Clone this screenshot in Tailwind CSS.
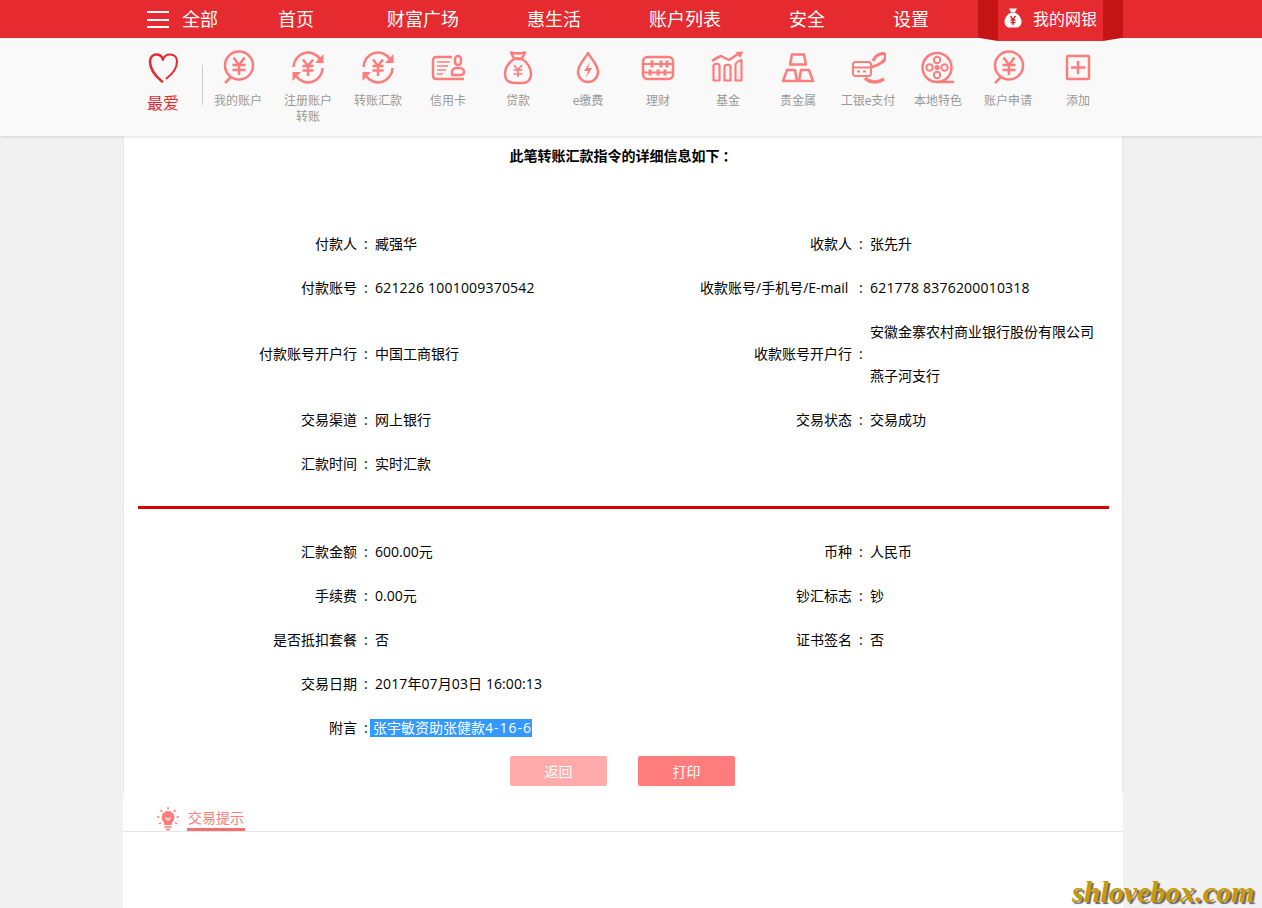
<!DOCTYPE html>
<html lang="zh-CN"><head><meta charset="utf-8"><script src="https://cdn.jsdelivr.net/npm/@tailwindcss/browser@4"></script></head>
<body class="bg-[#f1f1f1] m-0 overflow-hidden h-[908px] relative font-['Open_Sans','Noto_Sans_CJK_SC',sans-serif] text-[14px] text-black">
<header class="h-[38px] bg-[#e52b30] relative text-white text-[18px] leading-[38px] flex pl-[147px]">
  <div class="w-[22px] mt-[11px] h-[17px] flex flex-col justify-between"><i class="block h-[2px] bg-white"></i><i class="block h-[2px] bg-white"></i><i class="block h-[2px] bg-white"></i></div>
  <span class="ml-[13px]">全部</span><span class="ml-[60px]">首页</span><span class="ml-[73px]">财富广场</span><span class="ml-[68px]">惠生活</span><span class="ml-[68px]">账户列表</span><span class="ml-[68px]">安全</span><span class="ml-[68px]">设置</span>
  <div class="absolute left-[978px] top-0 w-[145px] h-[41px] z-20 flex text-[16px]">
    <div class="w-5 h-[41px] bg-[#c41414] [clip-path:polygon(0_0,100%_0,100%_100%,0_92%)]"></div>
    <div class="w-[105px] h-[41px] bg-[#e52b30] flex items-start pl-[6px] pt-[8px]">
      <svg width="18" height="20" viewBox="0 0 18 20"><path d="M5 0.500h8l-2 3.500H7z" fill="#fff"/><path d="M7 4.500h4c4 2 6.500 6 6.500 9 0 3.500-2 6-5 6h-7c-3 0-5-2.500-5-6 0-3 2.500-7 6.500-9z" fill="#fff"/><path d="M6.500 8l2.500 3.500L11.500 8M6.500 12h5M6.500 14.500h5M9 11.500V17" fill="none" stroke="#d42020" stroke-width="1.300"/></svg>
      <span class="ml-[11px] leading-[22px]">我的网银</span>
    </div>
    <div class="w-5 h-[41px] bg-[#c41414] [clip-path:polygon(0_0,100%_0,100%_92%,0_100%)]"></div>
  </div>
</header>

<nav class="h-[98px] bg-[#f9f9f9] shadow-[0_1px_3px_rgba(0,0,0,0.12)] relative z-10 flex pl-[145px] text-[12px] leading-4 text-[#999]">
  <div class="w-[36px] flex flex-col items-center pt-[12px] text-[#e52b30] text-[16px]">
    <svg width="32" height="34" viewBox="0 0 32 34" fill="none" stroke="#e52b30" stroke-linecap="round"><path d="M15 31.500C7 25 3 18 3 11.500 3 7 6 4.500 9.500 4.500 12.500 4.500 15 6.500 16 9.500" stroke-width="2.600"/><path d="M16 9.500C17 6.500 20 4.500 23 4.500 27 4.500 30 7 30 11.500 30 17 26 23.500 19.500 28.500" stroke-width="2"/></svg>
    <span class="mt-[9px] leading-5">最爱</span>
  </div>
  <div class="w-px h-10 bg-[#ccc] ml-[21px] mt-[27px]"></div>
  <div class="flex">
    <div class="w-[70px] text-center pt-[12px]"><svg class="mx-auto block" width="36" height="36" viewBox="0 0 36 36" fill="none" stroke="#ff7c7c" stroke-width="2.500"><circle cx="19" cy="15.500" r="14"/><path d="M5 33l6-6"/><path d="M13.500 7.500l5.500 7.500 5.500-7.500M12.500 15h13M12.500 20h13M19 15v10"/></svg><div class="mt-[7px] h-8">我的账户</div></div>
    <div class="w-[70px] text-center pt-[12px]"><svg class="mx-auto block" width="36" height="36" viewBox="0 0 36 36" fill="none" stroke="#ff7c7c" stroke-width="2.500"><path d="M3.500 17A14.500 14.500 0 0 1 30 9M32.500 18A14.500 14.500 0 0 1 6 26"/><path d="M33.500 4v9h-8.500zM2.500 31v-9H11z" fill="#ff7c7c" stroke="none"/><path d="M13 9.500l5 6.500 5-6.500M12.500 16h11M12.500 20.500h11M18 16v10"/></svg><div class="mt-[7px] h-8">注册账户<br>转账</div></div>
    <div class="w-[70px] text-center pt-[12px]"><svg class="mx-auto block" width="36" height="36" viewBox="0 0 36 36" fill="none" stroke="#ff7c7c" stroke-width="2.500"><path d="M3.500 17A14.500 14.500 0 0 1 30 9M32.500 18A14.500 14.500 0 0 1 6 26"/><path d="M33.500 4v9h-8.500zM2.500 31v-9H11z" fill="#ff7c7c" stroke="none"/><path d="M13 9.500l5 6.500 5-6.500M12.500 16h11M12.500 20.500h11M18 16v10"/></svg><div class="mt-[7px] h-8">转账汇款</div></div>
    <div class="w-[70px] text-center pt-[12px]"><svg class="mx-auto block" width="36" height="36" viewBox="0 0 36 36" fill="none" stroke="#ff7c7c" stroke-width="2"><path d="M22 7H6a3 3 0 0 0-3 3v16a3 3 0 0 0 3 3h28" stroke-width="2.500"/><path d="M7 12h13M7 16h11M7 20h9M7 24h6" stroke-width="1.600"/><rect x="25" y="6" width="6" height="9" rx="3" stroke-width="2.500"/><path d="M22 25v-3a4 4 0 0 1 4-4h4a4 4 0 0 1 4 4v0a3 3 0 0 1-3 3z" stroke-width="2.500"/></svg><div class="mt-[7px] h-8">信用卡</div></div>
    <div class="w-[70px] text-center pt-[12px]"><svg class="mx-auto block" width="36" height="36" viewBox="0 0 36 36" fill="none" stroke="#ff7c7c" stroke-width="2.500" stroke-linejoin="round"><path d="M11 2.500c4 1 10 1 14 0l-3 6h-8z"/><path d="M14 9C8 13 5 18 5 24c0 6 4 9 9 9h8c5 0 9-3 9-9 0-6-3-11-9-15z"/><path d="M14 15l4 5 4-5M13.500 20h9M13.500 24h9M18 20v7" stroke-width="1.700"/></svg><div class="mt-[7px] h-8">贷款</div></div>
    <div class="w-[70px] text-center pt-[12px]"><svg class="mx-auto block" width="36" height="36" viewBox="0 0 36 36" fill="none" stroke="#ff7c7c" stroke-width="2.500" stroke-linejoin="round"><path d="M18 3c-3 6-10 11-10 19a10 10 0 0 0 20 0C28 14 21 9 18 3z"/><path d="M20 12l-6 9h4l-2 7 6-10h-4z" fill="#ff7c7c" stroke="none"/></svg><div class="mt-[7px] h-8">e缴费</div></div>
    <div class="w-[70px] text-center pt-[12px]"><svg class="mx-auto block" width="36" height="36" viewBox="0 0 36 36" fill="none" stroke="#ff7c7c" stroke-width="2.500"><rect x="3" y="7" width="30" height="22" rx="4.500"/><path d="M3 14h30M3 22.500h30" stroke-width="2"/><path d="M12 10.500v7M21 10.500v7M27 10.500v7M10 19.500v6M18 19.500v6M25 19.500v6" stroke-width="3"/></svg><div class="mt-[7px] h-8">理财</div></div>
    <div class="w-[70px] text-center pt-[12px]"><svg class="mx-auto block" width="36" height="36" viewBox="0 0 36 36" fill="none" stroke="#ff7c7c" stroke-width="2.200" stroke-linejoin="round"><path d="M3.500 30.500V16c0-3 6-3 6 0v14.500zM14.500 30.500V17c0-3 6-3 6 0v13.500zM25.500 30.500V15c0-3 6-5 6-5v20.500z"/><path d="M2 11c3-2 6-4 9-5l8 4 9-6" stroke-width="2.500"/><path d="M33.500 1.500l-8 .5 4.500 6z" fill="#ff7c7c" stroke="none"/></svg><div class="mt-[7px] h-8">基金</div></div>
    <div class="w-[70px] text-center pt-[12px]"><svg class="mx-auto block" width="36" height="36" viewBox="0 0 36 36" fill="none" stroke="#ff7c7c" stroke-width="2.500" stroke-linejoin="round"><path d="M12 4.500h12l2 10H10zM7 20h8l2 11H3zM21 20h8l4 11H19z"/></svg><div class="mt-[7px] h-8">贵金属</div></div>
    <div class="w-[70px] text-center pt-[12px]"><svg class="mx-auto block" width="36" height="36" viewBox="0 0 36 36" fill="none" stroke="#ff7c7c" stroke-width="2"><rect x="3" y="12" width="18" height="14" rx="2.500"/><path d="M3 17.500h18"/><path d="M7 21.500h3M13 21.500h3"/><path d="M23 11C26 4 35 1 35.500 6 36 11 29 15 22 17" stroke-width="3"/><path d="M15 28c5 5 13 5 19 1" stroke-width="3.500"/></svg><div class="mt-[7px] h-8">工银e支付</div></div>
    <div class="w-[70px] text-center pt-[12px]"><svg class="mx-auto block" width="36" height="36" viewBox="0 0 36 36" fill="none" stroke="#ff7c7c" stroke-width="2.500"><circle cx="17" cy="17.500" r="14.500"/><path d="M17 32h17"/><g stroke-width="2"><circle cx="17" cy="10" r="3.200"/><circle cx="17" cy="25" r="3.200"/><circle cx="9.500" cy="17.500" r="3.200"/><circle cx="24.500" cy="17.500" r="3.200"/></g><circle cx="17" cy="17.500" r="1.300" fill="#ff7c7c"/></svg><div class="mt-[7px] h-8">本地特色</div></div>
    <div class="w-[70px] text-center pt-[12px]"><svg class="mx-auto block" width="36" height="36" viewBox="0 0 36 36" fill="none" stroke="#ff7c7c" stroke-width="2.500"><circle cx="19" cy="15.500" r="14"/><path d="M5 33l6-6"/><path d="M13.500 7.500l5.500 7.500 5.500-7.500M12.500 15h13M12.500 20h13M19 15v10"/></svg><div class="mt-[7px] h-8">账户申请</div></div>
    <div class="w-[70px] text-center pt-[12px]"><svg class="mx-auto block" width="36" height="36" viewBox="0 0 36 36" fill="none" stroke="#ff7c7c" stroke-width="2.500"><rect x="7" y="6" width="22" height="23" rx="1"/><path d="M11 17.500h14M18 11v13"/></svg><div class="mt-[7px] h-8">添加</div></div>
  </div>
</nav>

<main class="w-[1000px] h-[657px] ml-[123px] bg-white border-x border-[#e8e8e8] box-border pl-[14px]">
  <h1 class="text-center font-bold text-[14px] leading-5 pt-[9px] pr-[14px] h-[85px]">此笔转账汇款指令的详细信息如下<span class="pl-[3px] font-['Noto_Sans_CJK_TC']">：</span></h1>

  <div class="grid grid-cols-[231px_264px_231px_1fr] grid-rows-[44px_44px_88px_44px_44px] items-center w-[971px]">
    <div class="text-right">付款人<b class="inline-block w-3 font-normal pl-[7px] text-left">:</b></div><div class="pl-[6px]">臧强华</div><div class="text-right">收款人<b class="inline-block w-3 font-normal pl-[7px] text-left">:</b></div><div class="pl-[6px]">张先升</div>
    <div class="text-right">付款账号<b class="inline-block w-3 font-normal pl-[7px] text-left">:</b></div><div class="pl-[6px] tracking-[0.2px]">621226 1001009370542</div><div class="text-right">收款账号/手机号/E-mail <b class="inline-block w-3 font-normal pl-[7px] text-left">:</b></div><div class="pl-[6px] tracking-[0.2px]">621778 8376200010318</div>
    <div class="text-right">付款账号开户行<b class="inline-block w-3 font-normal pl-[7px] text-left">:</b></div><div class="pl-[6px]">中国工商银行</div><div class="text-right">收款账号开户行<b class="inline-block w-3 font-normal pl-[7px] text-left">:</b></div><div class="pl-[6px] pt-[1px] leading-[44px]">安徽金寨农村商业银行股份有限公司<br>燕子河支行</div>
    <div class="text-right">交易渠道<b class="inline-block w-3 font-normal pl-[7px] text-left">:</b></div><div class="pl-[6px]">网上银行</div><div class="text-right">交易状态<b class="inline-block w-3 font-normal pl-[7px] text-left">:</b></div><div class="pl-[6px]">交易成功</div>
    <div class="text-right">汇款时间<b class="inline-block w-3 font-normal pl-[7px] text-left">:</b></div><div class="pl-[6px]">实时汇款</div>
  </div>

  <div class="h-[3px] w-[971px] bg-[#d90000] mt-[21px] mb-[20px]"></div>

  <div class="grid grid-cols-[231px_264px_231px_1fr] auto-rows-[44px] items-center w-[971px]">
    <div class="text-right">汇款金额<b class="inline-block w-3 font-normal pl-[7px] text-left">:</b></div><div class="pl-[6px]">600.00元</div><div class="text-right">币种<b class="inline-block w-3 font-normal pl-[7px] text-left">:</b></div><div class="pl-[6px]">人民币</div>
    <div class="text-right">手续费<b class="inline-block w-3 font-normal pl-[7px] text-left">:</b></div><div class="pl-[6px]">0.00元</div><div class="text-right">钞汇标志<b class="inline-block w-3 font-normal pl-[7px] text-left">:</b></div><div class="pl-[6px]">钞</div>
    <div class="text-right">是否抵扣套餐<b class="inline-block w-3 font-normal pl-[7px] text-left">:</b></div><div class="pl-[6px]">否</div><div class="text-right">证书签名<b class="inline-block w-3 font-normal pl-[7px] text-left">:</b></div><div class="pl-[6px]">否</div>
    <div class="text-right">交易日期<b class="inline-block w-3 font-normal pl-[7px] text-left">:</b></div><div class="pl-[6px] tracking-[0.1px]">2017年07月03日 16:00:13</div><div></div><div></div>
    <div class="text-right">附言<b class="inline-block w-3 font-normal pl-[7px] text-left">:</b></div><div><span class="inline-block h-[18px] leading-[18px] pl-[3px] ml-[1px] bg-[#3399ff] text-white">张宇敏资助张健款<span class="tracking-[1px]">4-16-6</span></span></div>
  </div>

  <div class="flex mt-[7px] ml-[372px] gap-[31px]">
    <button class="w-[97px] h-[30px] rounded-[2px] bg-[#ffabab] text-white text-[14px]">返回</button>
    <button class="w-[97px] h-[30px] rounded-[2px] bg-[#ff7c7c] text-white text-[14px]">打印</button>
  </div>
</main>

<section class="absolute left-[123px] top-[793px] w-[1000px] h-[115px] bg-white">
  <div class="h-[39px] border-b border-[#e5e5e5] flex items-end pl-[33px]">
    <svg width="24" height="24" viewBox="0 0 24 24" fill="none"><path d="M12 4a6.500 6.500 0 0 0-4 11.500V18h8v-2.500A6.500 6.500 0 0 0 12 4z" fill="#ff7c7c"/><path d="M9.500 10.500l2.500 2.500 2.500-2.500" stroke="#fff" stroke-width="1.300"/><path d="M8.500 20h7M10 22.500h4" stroke="#ff7c7c" stroke-width="1.500"/><path d="M12 0v2.500M4.500 3l1.500 2M19.500 3L18 5M1 10h2.500M20.500 10H23M3 17l2-1.500M21 17l-2-1.500" stroke="#ff7c7c" stroke-width="1.500"/></svg>
    <span class="ml-[7px] w-[58px] text-center text-[#ff7c7c] leading-[17px] pb-[2px] border-b-[3px] border-[#f07070]">交易提示</span>
  </div>
</section>

<div class="absolute left-[1072px] top-[873px] z-30 text-[30px] leading-[38px] italic font-bold text-[#c79a0a] [font-family:'Liberation_Serif',serif] [text-shadow:2px_2px_1px_#666]">shlovebox.com</div>
</body></html>
